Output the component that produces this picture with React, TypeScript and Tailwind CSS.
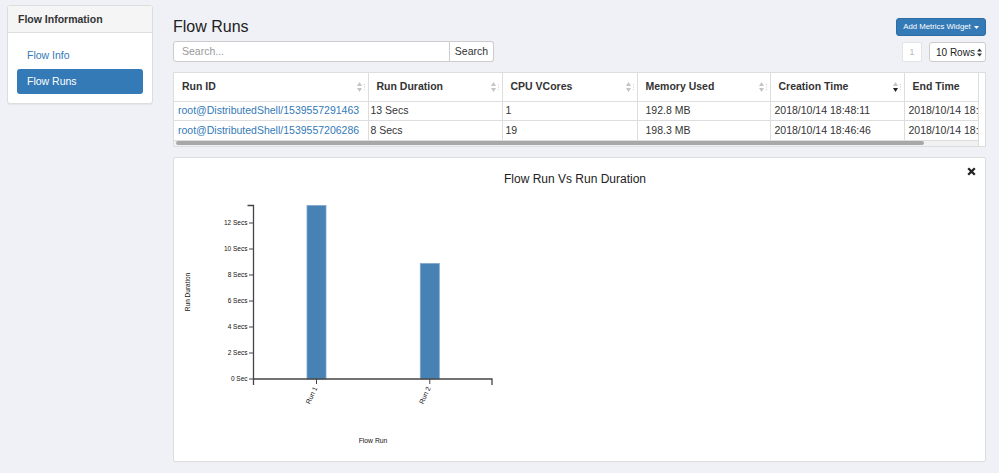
import React from "react";

type Column = { label: string; width: number; cellPad: number; sort: "none" | "desc" };

const columns: Column[] = [
  { label: "Run ID", width: 194, cellPad: 4, sort: "none" },
  { label: "Run Duration", width: 134, cellPad: 2, sort: "none" },
  { label: "CPU VCores", width: 135, cellPad: 3, sort: "none" },
  { label: "Memory Used", width: 133, cellPad: 8, sort: "none" },
  { label: "Creation Time", width: 134, cellPad: 4, sort: "desc" },
  { label: "End Time", width: 136, cellPad: 4, sort: "none" },
];

const rows = [
  ["root@DistributedShell/1539557291463", "13 Secs", "1", "192.8 MB", "2018/10/14 18:48:11", "2018/10/14 18:48:24"],
  ["root@DistributedShell/1539557206286", "8 Secs", "19", "198.3 MB", "2018/10/14 18:46:46", "2018/10/14 18:46:54"],
];

function SortIcon({ sort }: { sort: "none" | "desc" }) {
  return (
    <svg width="10" height="12" viewBox="0 0 10 12" className="shrink-0">
      <path d="M1 5 L3.5 1 L6 5 Z" fill="#c4c4c4" />
      <path d="M1 7 L3.5 11 L6 7 Z" fill={sort === "desc" ? "#222" : "#c4c4c4"} />
      <line x1="8.5" y1="3" x2="8.5" y2="10" stroke="#d0d0d0" strokeWidth="1" strokeDasharray="1 1.5" />
    </svg>
  );
}

function Sidebar() {
  return (
    <aside className="w-[146px] self-start rounded-[3px] border border-[#ddd] bg-white shadow-[0_1px_1px_rgba(0,0,0,0.05)]">
      <div className="flex h-[27px] items-center border-b border-[#ddd] bg-[#f5f5f5] pt-[1px] pl-[10px] text-[10.5px] font-bold text-[#333]">
        Flow Information
      </div>
      <div className="flex flex-col gap-[1px] px-[9px] pt-[10px] pb-[9px]">
        <a className="flex h-[25px] items-center rounded-[3px] px-[10px] text-[10.5px] text-[#337ab7]">Flow Info</a>
        <a className="flex h-[25px] items-center rounded-[3px] bg-[#337ab7] px-[10px] text-[10.5px] text-white">Flow Runs</a>
      </div>
    </aside>
  );
}

function RunsTable() {
  return (
    <div className="mt-[10px] flex w-[813px] border border-[#ddd] bg-white">
      <div className="w-[806px] overflow-hidden border-r border-[#ddd]">
        <table className="w-[866px] table-fixed border-collapse text-[10.5px] text-[#333]">
          <colgroup>
            {columns.map((c) => (
              <col key={c.label} style={{ width: c.width }} />
            ))}
          </colgroup>
          <thead>
            <tr className="h-[28px]">
              {columns.map((c) => (
                <th key={c.label} className="border-r border-b border-[#ddd] px-0 pt-[1px] text-left font-bold">
                  <div className="flex items-center justify-between pl-[8px] pr-[2px]">
                    <span>{c.label}</span>
                    <SortIcon sort={c.sort} />
                  </div>
                </th>
              ))}
            </tr>
          </thead>
          <tbody>
            {rows.map((r, ri) => (
              <tr key={ri} className={ri === 0 ? "h-[19px]" : "h-[20px]"}>
                {r.map((v, ci) => (
                  <td
                    key={ci}
                    className={`overflow-hidden border-r border-b border-[#ddd] pt-[1px] whitespace-nowrap ${ci === 0 ? "text-[#337ab7]" : ""}`}
                    style={{ paddingLeft: columns[ci].cellPad }}
                  >
                    {v}
                  </td>
                ))}
              </tr>
            ))}
          </tbody>
        </table>
        <div className="flex h-[5px] items-center bg-[#f1f1f1] px-[2px]">
          <div className="h-[4px] w-[748px] rounded-full bg-[#a8a8a8]" />
        </div>
      </div>
      <div className="w-[6px]" />
    </div>
  );
}

function Chart() {
  const y0 = 191;
  const step = 13;
  const ticks = [0, 2, 4, 6, 8, 10, 12];
  return (
    <svg width="340" height="270" viewBox="0 0 340 270" className="block font-['Liberation_Sans',Arial,sans-serif]">
      <rect x="133" y="17.5" width="19" height={y0 - 17.5} fill="#4682b4" stroke="#7ea6cc" strokeWidth="0.8" />
      <rect x="246.3" y="75.5" width="19" height={y0 - 75.5} fill="#4682b4" stroke="#7ea6cc" strokeWidth="0.8" />
      <path d={`M73.5,17.5 H79.5 V${y0}`} fill="none" stroke="#444" strokeWidth="1.3" />
      {ticks.map((t) => {
        const y = y0 - t * step;
        return (
          <g key={t}>
            <line x1="75" y1={y} x2="79.5" y2={y} stroke="#444" strokeWidth="1" />
            <text x="73.5" y={y + 2.3} fontSize="6.5" textAnchor="end" fill="#111">
              {t === 0 ? "0 Sec" : `${t} Secs`}
            </text>
          </g>
        );
      })}
      <path d={`M79.5,${y0 + 6} V${y0} H318 V${y0 + 6}`} fill="none" stroke="#444" strokeWidth="1.3" />
      {[
        { x: 142.5, label: "Run 1" },
        { x: 255.8, label: "Run 2" },
      ].map((b) => (
        <g key={b.label}>
          <line x1={b.x} y1={y0} x2={b.x} y2={y0 + 5} stroke="#444" strokeWidth="1" />
          <text
            x={b.x + 1}
            y={y0 + 9}
            fontSize="6.8"
            textAnchor="end"
            fill="#111"
            transform={`rotate(-65 ${b.x + 1} ${y0 + 9})`}
          >
            {b.label}
          </text>
        </g>
      ))}
      <text x="14" y="104" fontSize="6.5" textAnchor="middle" fill="#111" transform="rotate(-90 14 104)" dy="2">
        Run Duration
      </text>
      <text x="199" y="255" fontSize="6.8" textAnchor="middle" fill="#111">
        Flow Run
      </text>
    </svg>
  );
}

export default function App() {
  return (
    <div className="min-h-[473px] w-[999px] bg-[#f0f1f6] font-['Liberation_Sans',Arial,sans-serif] text-[#333]">
      <div className="flex pt-[5px] pl-[7px]">
        <Sidebar />
        <main className="ml-[20px] w-[813px] pt-[13px]">
          <div className="flex items-end justify-between">
            <h3 className="text-[16px] leading-[18px] text-[#222]">Flow Runs</h3>
            <button className="flex h-[18px] w-[90px] items-center justify-center gap-[3px] rounded-[3px] border border-[#2e6da4] bg-[#337ab7] text-[7.8px] text-white">
              Add Metrics Widget
              <svg width="5" height="3" viewBox="0 0 5 3">
                <path d="M0 0 H5 L2.5 3 Z" fill="#fff" />
              </svg>
            </button>
          </div>
          <div className="mt-[5px] flex h-[21px] items-stretch justify-between">
            <div className="flex">
              <input
                className="w-[277px] rounded-l-[3px] border border-[#ccc] bg-white pl-[8px] text-[10.5px] outline-none placeholder:text-[#999]"
                placeholder="Search..."
              />
              <button className="w-[44px] rounded-r-[3px] border border-l-0 border-[#ccc] bg-white text-[10.5px] text-[#333]">
                Search
              </button>
            </div>
            <div className="flex gap-[7px] pt-[1px]">
              <div className="flex w-[20px] items-center justify-center rounded-[2px] border border-[#e3e3e3] bg-white text-[9.5px] text-[#bbb]">
                1
              </div>
              <div className="flex w-[57px] items-center justify-between rounded-[3px] border border-[#ccc] bg-white pr-[3px] pl-[6px] text-[10px] whitespace-nowrap text-[#222]">
                <span>10 Rows</span>
                <svg width="5" height="9" viewBox="0 0 5 9" className="shrink-0">
                  <path d="M0 3.5 L2.5 0.5 L5 3.5 Z M0 5.5 L2.5 8.5 L5 5.5 Z" fill="#333" />
                </svg>
              </div>
            </div>
          </div>
          <RunsTable />
          <section className="relative mt-[10px] h-[305px] rounded-[2px] border border-[#ddd] bg-white">
            <div className="pt-[14px] pr-[9px] pb-[2px] text-center text-[12px] leading-[14px] text-[#222]">
              Flow Run Vs Run Duration
            </div>
            <button className="absolute top-[9px] right-[9px] p-0">
              <svg width="9" height="9" viewBox="0 0 9 9">
                <path d="M1.2 1.2 L7.8 7.8 M7.8 1.2 L1.2 7.8" stroke="#222" strokeWidth="2.3" />
              </svg>
            </button>
            <Chart />
          </section>
        </main>
      </div>
    </div>
  );
}
